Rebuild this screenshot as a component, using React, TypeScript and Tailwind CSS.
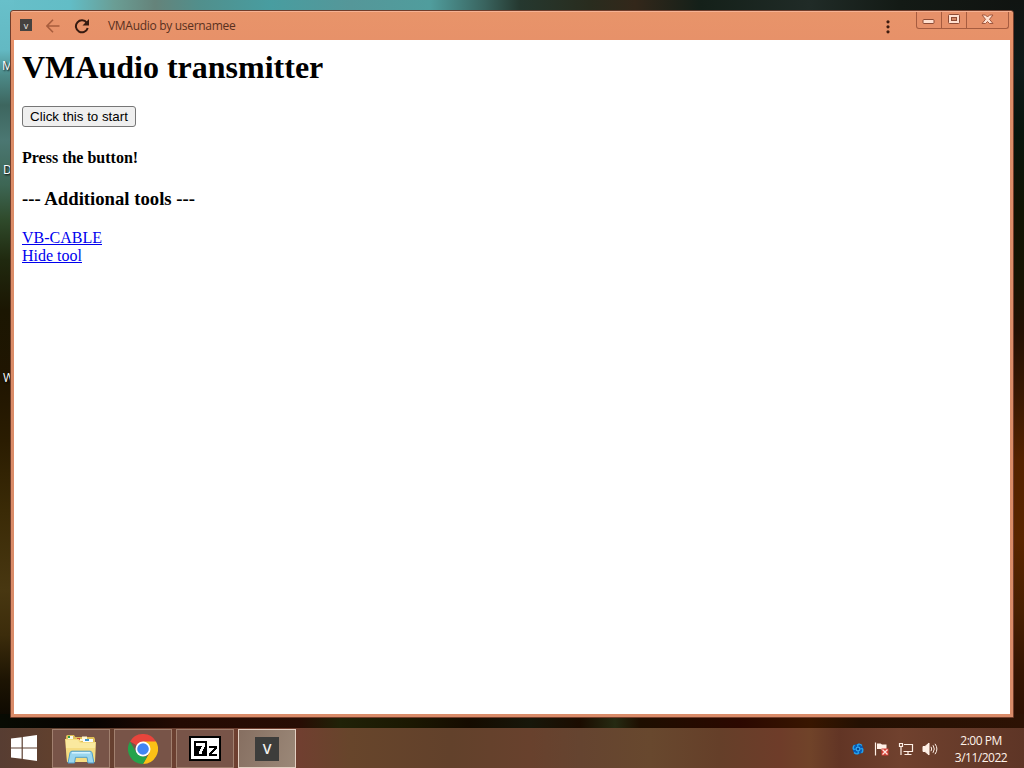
import type { ReactNode } from 'react'
import clsx from 'clsx'

const DESKTOP_LABELS = [
  { text: 'M', className: 'top-[58px] left-[2px]' },
  { text: 'D', className: 'top-[162px] left-[3px]' },
  { text: 'W', className: 'top-[370px] left-[3px]' },
]

function Wallpaper() {
  return (
    <div className="absolute inset-0 bg-[#1d1304]">
      <div className="absolute inset-x-0 top-0 h-10 bg-[linear-gradient(90deg,#68bfc9_0px,#62bdc6_70px,#6a9d94_115px,#65837a_155px,#518f8c_200px,#489da0_270px,#559799_350px,#509d9d_430px,#39635e_485px,#25382f_520px,#292c1e_590px,#33271a_635px,#142019_700px,#202b27_810px,#131a15_900px,#101310_1024px)]" />
      <div className="absolute inset-y-0 left-0 w-[14px] bg-[linear-gradient(180deg,#68c0ca_0px,#63b9c3_50px,#4c8a88_75px,#3d665f_105px,#4b7772_140px,#3d6654_185px,#2f4a2b_220px,#20290f_260px,#1b1602_310px,#201501_380px,#2a1c01_440px,#3a2a06_510px,#483711_590px,#3c2c0b_635px,#1d1403_680px,#090601_728px)]" />
      <div className="absolute inset-y-0 right-0 w-[14px] bg-[linear-gradient(180deg,#101412_0px,#0e1918_70px,#09150d_130px,#101303_210px,#171403_280px,#231003_330px,#381803_390px,#542200_460px,#592500_540px,#482002_610px,#351502_670px,#2b0e02_728px)]" />
      <div className="absolute inset-x-0 top-[714px] h-[14px] bg-[linear-gradient(90deg,#080b03_0px,#070301_90px,#240a02_180px,#280d04_300px,#202208_340px,#1b1802_410px,#150b00_470px,#17170a_530px,#1b0c00_580px,#252a12_615px,#1e0e00_640px,#2b0800_740px,#381600_810px,#241002_860px,#2d1204_1024px)]" />
    </div>
  )
}

function CaptionButtons() {
  return (
    <div className="flex h-[17px] w-[93px] rounded-b-[3px] border border-t-0 border-[#a65c40] bg-[#e69069]">
      <div className="flex w-[25px] items-center justify-center border-r border-[#a65c40]">
        <svg className="mt-[-2px] mr-px" width="13" height="11" viewBox="0 0 13 11">
          <rect x="1" y="5.5" width="11" height="4" rx="1" fill="#ffe0d0" stroke="#8c4b35" />
        </svg>
      </div>
      <div className="flex w-[25px] items-center justify-center border-r border-[#a65c40]">
        <svg className="mt-[-1px]" width="12" height="11" viewBox="0 0 12 11">
          <rect x=".5" y=".5" width="11" height="9" rx="1" fill="#ffe0d0" stroke="#8c4b35" />
          <rect x="3.5" y="3.5" width="5" height="3" fill="#d48663" stroke="#8c4b35" />
        </svg>
      </div>
      <div className="flex flex-1 items-center justify-center">
        <svg className="mt-[-2px]" width="13" height="11" viewBox="0 0 13 11">
          <path d="M1 1h3.5l2 2 2-2H12L8.5 5.3 12 9.5H8.5l-2-2-2 2H1l3.5-4.2z" fill="#ffe0d0" stroke="#a0573e" />
        </svg>
      </div>
    </div>
  )
}

function TitleBar() {
  return (
    <div className="flex h-[28px] items-start">
      <div className="mt-[7px] ml-[8px] flex h-[12px] w-[12px] items-center justify-center bg-[#454240] font-['Open_Sans',sans-serif] text-[9px] leading-none text-[#eeeae7]">
        v
      </div>
      <svg className="mt-[7px] ml-[14px]" width="14" height="14" viewBox="0 0 14 14" fill="none" stroke="#a85d3d" strokeWidth="1.6">
        <path d="M13.5 7H1M7 .8.9 7 7 13.2" />
      </svg>
      <svg className="mt-[7px] ml-[14px]" width="16" height="15" viewBox="0 0 16 15" fill="none" stroke="#351a10" strokeWidth="2">
        <path d="M12.8 3.8A6 6 0 1 0 13.7 9" />
        <path d="M15 0v6.5H8.5z" fill="#351a10" stroke="none" />
      </svg>
      <span className="mt-[6px] ml-[18px] font-['Open_Sans',sans-serif] text-[12px] leading-4 tracking-[-0.3px] whitespace-nowrap text-[#59301e]">
        VMAudio by usernamee
      </span>
      <div className="flex-1" />
      <svg className="mt-[8px] mr-[26px]" width="4" height="14" viewBox="0 0 4 14" fill="#3d1c10">
        <circle cx="2" cy="1.8" r="1.6" />
        <circle cx="2" cy="6.8" r="1.6" />
        <circle cx="2" cy="11.8" r="1.6" />
      </svg>
      <CaptionButtons />
      <div className="w-[3px]" />
    </div>
  )
}

function AppWindow() {
  return (
    <div className="absolute top-[10px] left-[10px] flex h-[708px] w-[1004px] flex-col rounded-t-[3px] border border-[#713d2b] bg-[linear-gradient(180deg,#e8946a_0px,#e79169_30px,#dc8d68_60px,#d98b69_100%)] shadow-[inset_0_1px_0_#f5b294]">
      <div className="px-px pt-px">
        <TitleBar />
      </div>
      <main className="mx-[3px] mb-[3px] flex-1 bg-white px-2 pt-[9px] font-['Liberation_Serif',serif] text-base leading-[18px] text-black">
        <h1 className="text-[32px] leading-[37px] font-bold">VMAudio transmitter</h1>
        <button className="mt-[20px] flex h-[21px] w-[114px] items-center justify-center rounded-[3px] border border-[#767676] bg-[#efefef] font-['Liberation_Sans',sans-serif] text-[13.333px] leading-[15px] whitespace-nowrap">
          Click this to start
        </button>
        <h4 className="mt-[22px] font-bold">Press the button!</h4>
        <h3 className="mt-[21px] text-[18.72px] leading-[21px] font-bold">--- Additional tools ---</h3>
        <div className="mt-[20px] flex flex-col items-start text-[#0000ee] underline">
          <a href="#">VB-CABLE</a>
          <a href="#">Hide tool</a>
        </div>
      </main>
    </div>
  )
}

function WindowsLogo() {
  return (
    <svg width="26" height="26" viewBox="0 0 26 26" fill="#fff">
      <path d="M0 3.6 10.6 2.2v10.2H0zM11.8 2 26 0v12.4H11.8zM0 13.6h10.6v10.2L0 22.4zM11.8 13.6H26V26l-14.2-2z" />
    </svg>
  )
}

function ExplorerIcon() {
  return (
    <svg width="34" height="30" viewBox="0 0 34 30">
      <path d="M2 2.2 3 1h7l1.3 2H30l1 2v22H3z" fill="#dfbd58" />
      <path d="M4 2h5v3H4z" fill="#f7f7e9" />
      <path d="M4 2h2v2H4z" fill="#329b48" />
      <path d="M10 5h8V2.5h5V7h-13z" fill="#fff6d2" />
      <path d="M13 4h3v2h-3z" fill="#cc4c37" />
      <path d="M19 5h10v3H19z" fill="#f8fbff" />
      <path d="M21 5h4v2h-4z" fill="#3d93c5" />
      <path d="M1 5h14l2 3h15l-1 20H3z" fill="#f5dc82" />
      <path d="M2 6h12l2 3h15v5H2z" fill="#fae99f" />
      <path d="M4 29 6 18.8q.4-1.6 2-1.6h18q1.6 0 2 1.6L30 29h-6l-1-5.7H11.500L10.500 29z" fill="#9ad6ef" stroke="#509fc9" />
      <path d="M8 18.8h18" stroke="#d8f5ff" strokeWidth="1.5" />
    </svg>
  )
}

function ChromeIcon() {
  return (
    <svg width="30" height="30" viewBox="0 0 48 48">
      <path d="M24 24 3.2 12A24 24 0 0 1 44.8 12z" fill="#e8453c" />
      <path d="M24 12h20.8A24 24 0 0 1 24 48l10.4-18z" fill="#fbc116" />
      <path d="M3.2 12 13.6 30 24 36h6.9L24 48A24 24 0 0 1 3.2 12z" fill="#25a34b" />
      <circle cx="24" cy="24" r="12" fill="#fff" />
      <circle cx="24" cy="24" r="9.3" fill="#4285f4" />
    </svg>
  )
}

function SevenZipIcon() {
  return (
    <svg width="32" height="25" viewBox="0 0 32 25" shapeRendering="crispEdges">
      <path d="M0 0h32v25H0z" fill="#000" />
      <path d="M2 2h28v21H2z" fill="#fff" />
      <path d="M5 5h13v15H5z" fill="#000" />
      <path d="M7 7h9v4h-1v2h-1v2h-1v3h-3v-3h1v-2h1v-2h1v-1H7z" fill="#fff" />
      <path d="M20 10h8v3h-1v1h-1v1h-1v1h-1v1h-1v1h5v2h-8v-3h1v-1h1v-1h1v-1h1v-1h1v-1h-5z" fill="#000" />
    </svg>
  )
}

function TaskButton({ active, children }: { active?: boolean; children: ReactNode }) {
  return (
    <div
      className={clsx(
        'flex h-[39px] w-[58px] items-center justify-center border',
        active ? 'border-[#e3cfc2] bg-[linear-gradient(110deg,#866f61,#9b8878)]' : 'border-[#a1806f] bg-[#785448]',
      )}
    >
      {children}
    </div>
  )
}

function Tray() {
  return (
    <div className="flex items-center">
      <svg width="12" height="12" viewBox="0 0 12 12" fill="none">
        <circle cx="6" cy="6" r="5.3" fill="#075cb8" />
        <path d="M6 3.4C4.500.8 8 .4 10 2.500M8.600 6c2.600-1.500 3 2 .9 4M6 8.600c1.500 2.600-2 3-4 .9M3.400 6C.8 7.500.4 4 2.500 2" stroke="#22a2ee" strokeWidth="1.4" />
        <circle cx="6" cy="6" r="2" stroke="#43bdfa" />
        <circle cx="6" cy="6" r=".9" fill="#063f86" />
      </svg>
      {/* action center flag */}
      <svg className="ml-[10px]" width="16" height="16" viewBox="0 0 16 16">
        <path d="M1.500 1.500v13" stroke="#fff0e6" strokeWidth="1.2" />
        <path d="M3 2.500h3.500l1.500 1h4.500V9H8L6.500 8H3z" fill="#fff0e6" />
        <path d="M7.500 7.500h7v7h-7z" fill="#d63f35" />
        <path d="m8.500 8.500 5 5m0-5-5 5" stroke="#ffe6df" strokeWidth="1.3" />
      </svg>
      <svg className="ml-[8px]" width="16" height="15" viewBox="0 0 16 15" fill="none" stroke="#fff0e6" strokeWidth="1.2">
        <path d="M6 2.500h8.500v7H5.500M10 9.500v3M6.500 12.500h7" />
        <path d="M1.500 1.500h3v3h-3zM3 4.500V13" />
      </svg>
      <svg className="ml-[8px]" width="16" height="14" viewBox="0 0 16 14" fill="none" stroke="#fff0e6">
        <path d="M1 4.500h2L7 1v12L3 9.500H1z" fill="#fff0e6" />
        <path d="M9 4.800q1.400 2.200 0 4.400M11 3.200q2.600 3.800 0 7.600M13 1.800q3.800 5.200 0 10.400" />
      </svg>
    </div>
  )
}

function Taskbar() {
  return (
    <footer className="absolute inset-x-0 bottom-0 flex h-10 items-start bg-[linear-gradient(90deg,#573d32_0px,#60402e_50px,#6b4031_150px,#703f30_300px,#67452b_350px,#62412b_450px,#68412d_530px,#654430_580px,#68482e_650px,#653f29_720px,#6e3c29_780px,#704329_810px,#623525_840px,#70412e_900px,#5e3526_1024px)]">
      <div className="mt-[7px] w-[52px] pl-[11px]">
        <WindowsLogo />
      </div>
      <div className="mt-px flex gap-1">
        <TaskButton><ExplorerIcon /></TaskButton>
        <TaskButton><ChromeIcon /></TaskButton>
        <TaskButton><SevenZipIcon /></TaskButton>
        <TaskButton active>
          <div className="flex h-6 w-6 items-center justify-center bg-[#3d3d3b] font-['Open_Sans',sans-serif] text-[14px] leading-none font-semibold text-[#f2f0ed]">
            V
          </div>
        </TaskButton>
      </div>
      <div className="mt-[13px] ml-auto">
        <Tray />
      </div>
      <div className="mt-[4px] mr-[12px] ml-[12px] w-[62px] text-center font-['Open_Sans',sans-serif] text-[12px] leading-[17px] tracking-[-0.5px] whitespace-nowrap text-[#fff2e9]">
        <div>2:00 PM</div>
        <div>3/11/2022</div>
      </div>
    </footer>
  )
}

export default function App() {
  return (
    <div className="relative h-[768px] w-[1024px] overflow-hidden">
      <Wallpaper />
      {DESKTOP_LABELS.map((label) => (
        <span
          key={label.text}
          className={clsx(
            "absolute font-['Open_Sans',sans-serif] text-[12px] leading-4 text-white [text-shadow:1px_1px_2px_#000]",
            label.className,
          )}
        >
          {label.text}
        </span>
      ))}
      <AppWindow />
      <Taskbar />
    </div>
  )
}
